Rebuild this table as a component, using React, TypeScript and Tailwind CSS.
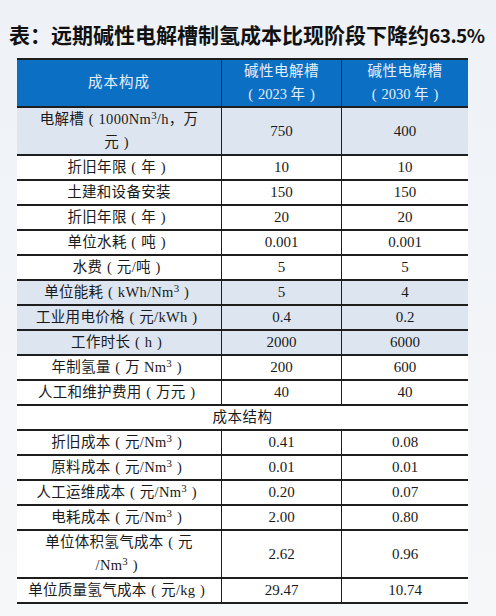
import type { ReactNode } from 'react';

type Row = {
  label: ReactNode;
  a: string;
  b: string;
  shaded?: boolean;
  tall?: boolean;
};

// full-width brackets drawn with a centred Latin paren, like the source document
const O = () => <span className="inline-block w-[1em] text-center">(</span>;
const C = () => <span className="inline-block w-[1em] text-center">)</span>;

const Nm3 = () => (
  <>
    Nm<sup>3</sup>
  </>
);

const top: Row[] = [
  {
    label: (
      <>
        电解槽<O />1000<Nm3 />/h，万
        <br />
        元<C />
      </>
    ),
    a: '750',
    b: '400',
    shaded: true,
    tall: true,
  },
  { label: <>折旧年限<O />年<C /></>, a: '10', b: '10' },
  { label: '土建和设备安装', a: '150', b: '150' },
  { label: <>折旧年限<O />年<C /></>, a: '20', b: '20' },
  { label: <>单位水耗<O />吨<C /></>, a: '0.001', b: '0.001' },
  { label: <>水费<O />元/吨<C /></>, a: '5', b: '5' },
  { label: <>单位能耗<O />kWh/<Nm3 /><C /></>, a: '5', b: '4', shaded: true },
  { label: <>工业用电价格<O />元/kWh<C /></>, a: '0.4', b: '0.2', shaded: true },
  { label: <>工作时长<O />h<C /></>, a: '2000', b: '6000', shaded: true },
  { label: <>年制氢量<O />万 <Nm3 /><C /></>, a: '200', b: '600' },
  { label: <>人工和维护费用<O />万元<C /></>, a: '40', b: '40' },
];

const bottom: Row[] = [
  { label: <>折旧成本<O />元/<Nm3 /><C /></>, a: '0.41', b: '0.08' },
  { label: <>原料成本<O />元/<Nm3 /><C /></>, a: '0.01', b: '0.01' },
  { label: <>人工运维成本<O />元/<Nm3 /><C /></>, a: '0.20', b: '0.07' },
  { label: <>电耗成本<O />元/<Nm3 /><C /></>, a: '2.00', b: '0.80' },
  {
    label: (
      <>
        单位体积氢气成本<O />元
        <br />
        /<Nm3 /><C />
      </>
    ),
    a: '2.62',
    b: '0.96',
    tall: true,
  },
  { label: <>单位质量氢气成本<O />元/kg<C /></>, a: '29.47', b: '10.74' },
];

function DataRow({ row }: { row: Row }) {
  return (
    <div
      className={`grid grid-cols-[204px_120px_127px] border-t-2 border-[#1e1e1e] ${
        row.tall ? 'h-[48px]' : 'h-[25px]'
      } ${row.shaded ? 'bg-[#dde5f0]' : 'bg-white'}`}
    >
      <div className="flex items-center justify-center text-center">
        <span className="leading-[23px] tracking-[0.3px]">{row.label}</span>
      </div>
      <div className="flex items-center justify-center border-l border-[#1e1e1e] text-[15px]">{row.a}</div>
      <div className="flex items-center justify-center border-l border-[#1e1e1e] text-[15px]">{row.b}</div>
    </div>
  );
}

export default function App() {
  return (
    <div className="h-[616px] w-[496px] bg-gradient-to-b from-[#eef2f7] to-[#f6f7f9]">
      <div className="whitespace-nowrap pl-[9px] pt-[20px] text-[21px] font-bold leading-[28px] text-[#111] [font-family:'Noto_Sans_CJK_SC',sans-serif]">
        表<span className="inline-block w-[1em]">：</span>远期碱性电解槽制氢成本比现阶段下降约
        <span className="text-[19px] tracking-[-0.5px]">63.5%</span>
      </div>
      <div className="ml-[17px] mt-[9px] w-[451px] text-[14.5px] text-[#1a1a1a] [font-family:'Liberation_Serif','Noto_Sans_CJK_SC',serif]">
        <div className="grid h-[48px] grid-cols-[204px_120px_127px] border-t-2 border-[#1e1e1e] bg-[#0b6fc3] text-[#e6eef9]">
          <div className="flex items-center justify-center tracking-[1px]">成本构成</div>
          <div className="flex flex-col items-center justify-center border-l border-[#1e1e1e] leading-[23px]">
            <span className="tracking-[0.5px]">碱性电解槽</span>
            <span>
              <O />2023 年<C />
            </span>
          </div>
          <div className="flex flex-col items-center justify-center border-l border-[#1e1e1e] leading-[23px]">
            <span className="tracking-[0.5px]">碱性电解槽</span>
            <span>
              <O />2030 年<C />
            </span>
          </div>
        </div>
        {top.map((row, i) => (
          <DataRow key={i} row={row} />
        ))}
        <div className="flex h-[25px] items-center justify-center border-t-2 border-[#1e1e1e] bg-white tracking-[0.5px]">
          成本结构
        </div>
        {bottom.map((row, i) => (
          <DataRow key={i} row={row} />
        ))}
        <div className="border-t-2 border-[#1e1e1e]" />
      </div>
    </div>
  );
}
